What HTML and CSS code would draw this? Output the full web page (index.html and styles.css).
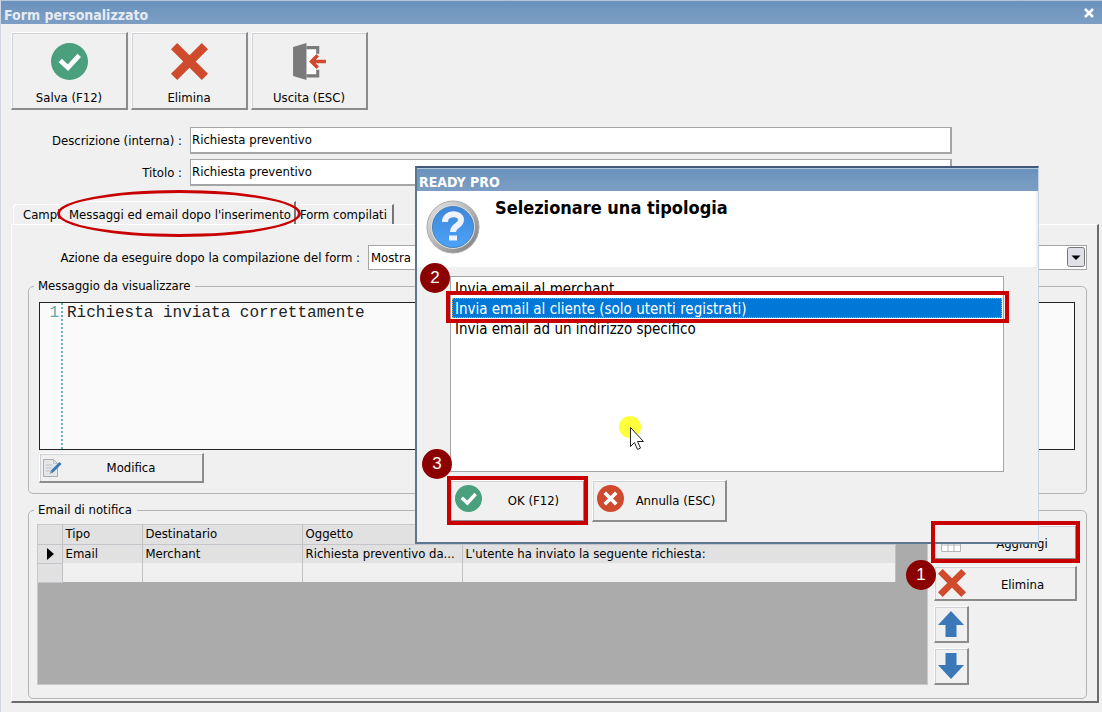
FILE: index.html
```
<!DOCTYPE html>
<html lang="it">

<head>
    <meta charset="UTF-8">
    <meta name="viewport" content="width=device-width, initial-scale=1.0">
    <title>Form personalizzato</title>
    <link rel="stylesheet" href="styles.css">
</head>

<body>

    <!-- shared icons -->
    <svg class="sprite" aria-hidden="true">
        <symbol id="icon-ok" viewBox="0 0 36 36">
            <circle cx="18" cy="18" r="18" fill="#4a9f7c" />
            <path d="M9 17l7.500 7 11-12" fill="none" stroke="#fff" stroke-width="4.500" />
        </symbol>
        <symbol id="icon-cross" viewBox="0 0 36 36">
            <path d="M3 3l30 30M33 3L3 33" stroke="#d04a2d" stroke-width="8.500" />
        </symbol>
        <symbol id="icon-exit" viewBox="0 0 36 36">
            <path d="M16 4h10v28H16z" fill="#fff" />
            <path d="M15 4.500h11v6M15 32h11v-6" fill="none" stroke="#7a7a7a" stroke-width="3" />
            <path d="M2 4L15 0v36L2 32z" fill="#7a7a7a" />
            <path d="M34 18H20M26 12l-6 6 6 6" fill="none" stroke="#d04a2d" stroke-width="3.500" />
        </symbol>
        <symbol id="icon-cancel" viewBox="0 0 26 26">
            <circle cx="13" cy="13" r="13" fill="#d04a2d" />
            <path d="M7.500 7.500l11 11M18.500 7.500l-11 11" stroke="#fff" stroke-width="3.500" />
        </symbol>
        <symbol id="icon-arrow" viewBox="0 0 26 26">
            <path d="M13 0l13 14h-7.500v12h-11V14H0z" fill="#3a78b8" />
        </symbol>
    </svg>

    <main class="window">
        <header class="titlebar">
            <h1>Form personalizzato</h1>
            <button type="button" class="close" aria-label="Chiudi">
                <svg width="10" height="10" viewBox="0 0 10 10"><path d="M1 1l8 8M9 1L1 9" stroke="#fff" stroke-width="2.500" /></svg>
            </button>
        </header>

        <div class="toolbar">
            <button type="button" class="btn btn-tool"><svg><use href="#icon-ok" /></svg>Salva (F12)</button>
            <button type="button" class="btn btn-tool"><svg><use href="#icon-cross" /></svg>Elimina</button>
            <button type="button" class="btn btn-tool"><svg><use href="#icon-exit" /></svg>Uscita (ESC)</button>
        </div>

        <div class="fields">
            <label for="descrizione">Descrizione (interna) :</label>
            <input type="text" id="descrizione" value="Richiesta preventivo">
            <label for="titolo">Titolo :</label>
            <input type="text" id="titolo" value="Richiesta preventivo">
        </div>

        <div class="tabs" role="tablist">
            <button type="button" class="tab tab-first" role="tab">Campi</button>
            <div class="marked">
                <button type="button" class="tab active" role="tab" aria-selected="true">Messaggi ed email dopo l'inserimento</button>
                <span class="mark mark-oval"></span>
            </div>
            <button type="button" class="tab" role="tab">Form compilati</button>
        </div>

        <section class="panel">
            <div class="action-row">
                <label for="azione">Azione da eseguire dopo la compilazione del form :</label>
                <div class="select-wrap">
                    <select id="azione">
                        <option>Mostra messaggio</option>
                    </select>
                    <svg class="drop" viewBox="0 0 18 20"><rect x=".5" y=".5" width="17" height="19" rx="2" fill="#dfe1e6" stroke="#777" /><path d="M4.500 8.500h9L9 13z" fill="#000" /></svg>
                </div>
            </div>

            <fieldset class="group">
                <legend>Messaggio da visualizzare</legend>
                <div class="editor">
                    <span class="gutter">1</span>
                    <textarea aria-label="Messaggio da visualizzare" spellcheck="false">Richiesta inviata correttamente</textarea>
                </div>
                <button type="button" class="btn btn-edit">
                    <svg width="20" height="20" viewBox="0 0 20 20">
                        <path d="M1.500 1.500h10l4 4v13h-14z" fill="#e4e6e8" stroke="#a9adb1" />
                        <path d="M11.500 1.500v4h4M4 7h6M4 10h6M4 13h4" fill="none" stroke="#bfc3c7" />
                        <path d="M18.500 5l-9 9" stroke="#3a78b8" stroke-width="3" />
                        <path d="M9 12.500L7.500 16l3.500-1.500z" fill="#8a9299" />
                    </svg>
                    <span>Modifica</span>
                </button>
            </fieldset>

            <fieldset class="group group-mail">
                <legend>Email di notifica</legend>
                <div class="mail">
                    <div class="grid">
                        <table>
                            <colgroup>
                                <col class="col-mark">
                                <col class="col-type">
                                <col class="col-text">
                                <col class="col-text">
                                <col>
                            </colgroup>
                            <thead>
                                <tr>
                                    <th></th>
                                    <th>Tipo</th>
                                    <th>Destinatario</th>
                                    <th>Oggetto</th>
                                    <th>Messaggio</th>
                                </tr>
                            </thead>
                            <tbody>
                                <tr class="current">
                                    <th><svg width="7" height="12" viewBox="0 0 7 12"><path d="M0 0l7 6-7 6z" /></svg></th>
                                    <td>Email</td>
                                    <td>Merchant</td>
                                    <td>Richiesta preventivo da...</td>
                                    <td>L'utente ha inviato la seguente richiesta:</td>
                                </tr>
                                <tr>
                                    <th></th>
                                    <td></td>
                                    <td></td>
                                    <td></td>
                                    <td></td>
                                </tr>
                            </tbody>
                        </table>
                    </div>
                    <div class="side">
                        <div class="marked">
                            <button type="button" class="btn btn-side">
                                <svg width="20" height="20" viewBox="0 0 20 20"><path d="M.500.500h19v19H.500zM.500 7h19M.500 13h19M7 .500v19M13 .500v19" fill="#fff" stroke="#b5b5b5" /></svg>
                                <span>Aggiungi</span>
                            </button>
                            <span class="mark mark-box"></span>
                            <span class="badge badge-add">1</span>
                        </div>
                        <button type="button" class="btn btn-side"><svg width="28" height="28"><use href="#icon-cross" /></svg><span>Elimina</span></button>
                        <button type="button" class="btn btn-move" aria-label="Sposta su"><svg width="26" height="26"><use href="#icon-arrow" /></svg></button>
                        <button type="button" class="btn btn-move down" aria-label="Sposta giù"><svg width="26" height="26"><use href="#icon-arrow" /></svg></button>
                    </div>
                </div>
            </fieldset>
        </section>

        <div class="dialog" role="dialog" aria-labelledby="dialogTitle">
            <div class="titlebar">READY PRO</div>
            <div class="dialog-head">
                <svg width="54" height="54" viewBox="0 0 54 54">
                    <defs>
                        <linearGradient id="ring" x1="0" y1="0" x2="1" y2="1">
                            <stop offset="0" stop-color="#e8e8e8" />
                            <stop offset=".5" stop-color="#b5b5b5" />
                            <stop offset="1" stop-color="#777" />
                        </linearGradient>
                        <linearGradient id="ball" x1="0" y1="0" x2="0" y2="1">
                            <stop offset="0" stop-color="#3f86d8" />
                            <stop offset="1" stop-color="#4ba4f8" />
                        </linearGradient>
                    </defs>
                    <circle cx="27" cy="27" r="26" fill="url(#ring)" stroke="#aaa" />
                    <circle cx="27" cy="27" r="22" fill="#ddd" />
                    <circle cx="27" cy="27" r="20.500" fill="url(#ball)" stroke="#4a80c0" />
                    <path d="M19 22c0-10 16-10 16-2 0 6-8 5-8 12" fill="none" stroke="#f0f2ff" stroke-width="6" />
                    <path d="M23 35.500h8v5h-8z" fill="#f0f2ff" />
                </svg>
                <h2 id="dialogTitle">Selezionare una tipologia</h2>
            </div>
            <div class="dialog-body">
                <div class="marked">
                    <select class="listbox" size="9" aria-labelledby="dialogTitle">
                        <option>Invia email al merchant</option>
                        <option selected>Invia email al cliente (solo utenti registrati)</option>
                        <option>Invia email ad un indirizzo specifico</option>
                    </select>
                    <span class="mark mark-option"></span>
                    <span class="badge badge-list">2</span>
                    <svg class="pointer" width="28" height="36" viewBox="0 0 28 36">
                        <circle cx="11" cy="11" r="11" fill="#ffff3c" />
                        <path d="M11.500 11.500v19l4-4 3 7 3-1.500-3-6.500h6z" fill="#fff" stroke="#222" />
                    </svg>
                </div>
                <div class="dialog-buttons">
                    <div class="marked">
                        <button type="button" class="btn btn-dialog"><svg width="27" height="27"><use href="#icon-ok" /></svg><span>OK (F12)</span></button>
                        <span class="mark mark-box"></span>
                        <span class="badge badge-ok">3</span>
                    </div>
                    <button type="button" class="btn btn-dialog"><svg width="27" height="27"><use href="#icon-cancel" /></svg><span>Annulla (ESC)</span></button>
                </div>
            </div>
        </div>
    </main>

</body>

</html>
```
FILE: styles.css
```
* {
    box-sizing: border-box;
}

body {
    margin: 0;
    background-color: #f0f0f0;
    color: #000;
    font-family: Tahoma, "DejaVu Sans Condensed", "Noto Sans", sans-serif;
    font-size: 13px;
    line-height: 16px;
}

button,
input,
select {
    font: inherit;
    color: inherit;
}

.sprite {
    position: absolute;
    width: 0;
    height: 0;
}

.window {
    position: relative;
    display: flex;
    flex-direction: column;
    min-height: 100vh;
    padding-bottom: 9px;
    border-left: 1px solid #d0d3e2;
}

.titlebar {
    display: flex;
    justify-content: space-between;
    align-items: center;
    height: 24px;
    padding: 4px 8px 0 3px;
    border-top: 1px solid #b4c8dc;
    background: linear-gradient(#6a92bc, #7d9ec4);
    color: #e6ebf2;
    font-size: 14px;
    font-weight: bold;
}

.titlebar h1 {
    margin: 0;
    font-size: 14px;
}

.close {
    display: flex;
    padding: 0 0 4px;
    border: none;
    background: none;
}

/* Buttons */
.btn {
    display: flex;
    align-items: center;
    padding: 2px;
    border: 1px solid #fff;
    border-right: 2px solid #8c8c8c;
    border-bottom: 2px solid #8c8c8c;
    background-color: #f0f0f0;
    box-shadow: inset 1px 1px #cfcfd6;
}

.btn span {
    flex: 1;
    text-align: center;
}

.toolbar {
    display: flex;
    gap: 3px;
    padding: 8px 10px 0;
}

.btn-tool {
    flex-direction: column;
    justify-content: space-between;
    width: 117px;
    height: 78px;
    padding: 10px 2px 2px;
}

.btn-tool svg {
    width: 37px;
    height: 37px;
}

/* Fields */
.fields {
    display: grid;
    grid-template-columns: 171px 1fr;
    gap: 5px 8px;
    align-items: center;
    padding: 17px 150px 0 10px;
}

.fields label {
    text-align: right;
}

.fields input {
    height: 27px;
    padding: 0 1px 1px;
    border: 1px solid #a5a5a5;
    border-width: 1px 2px 2px 1px;
    background-color: #fff;
}

/* Tabs */
.tabs {
    display: flex;
    align-items: flex-end;
    height: 38px;
    padding-left: 12px;
}

.marked {
    position: relative;
}

.tab {
    display: block;
    height: 20px;
    padding: 0 5px 0 4px;
    border: none;
    border-top: 1px solid #fff;
    border-right: 2px solid #777;
    background-color: #f0f0f0;
    white-space: nowrap;
}

.tab-first {
    width: 48px;
    padding: 0 0 0 9px;
    border-left: 1px solid #fff;
    border-right: none;
    border-radius: 4px 0 0;
    text-align: left;
}

.tab.active {
    height: 23px;
    padding: 3px 3px 0 8px;
}

.panel {
    flex: 1;
    display: flex;
    flex-direction: column;
    margin: 0 3px 0 10px;
    padding: 20px 10px 2px 16px;
    border: 1px solid #fff;
    border-right: 2px solid #6c6c6c;
    border-bottom: 2px solid #6c6c6c;
}

.action-row {
    display: flex;
    align-items: center;
    gap: 8px;
    margin-bottom: 8px;
}

.action-row label {
    width: 332px;
    text-align: right;
}

.select-wrap {
    position: relative;
    flex: 1;
}

.select-wrap select {
    display: block;
    width: 100%;
    height: 25px;
    padding: 0 2px;
    border: 1px solid #a5a5a5;
    border-radius: 0;
    background-color: #fff;
    appearance: none;
}

.drop {
    position: absolute;
    top: 2px;
    right: 2px;
    width: 18px;
    height: 20px;
    pointer-events: none;
}

/* Groups */
.group {
    min-width: 0;
    margin: 0 0 8px;
    padding: 8px 11px 10px 10px;
    border: 1px solid #b4b4b4;
    border-radius: 5px;
}

.group legend {
    margin-left: -5px;
    padding: 0 5px 0 4px;
}

.editor {
    display: flex;
    height: 148px;
    margin-bottom: 3px;
    border: 1px solid #222;
    background-color: #fafafa;
    font: 16px/20px "Liberation Mono", monospace;
}

.gutter {
    width: 23px;
    padding-right: 2px;
    border-right: 2px dotted #6fb4b4;
    color: #5fa8a8;
    text-align: right;
}

.editor textarea {
    flex: 1;
    padding: 0 4px;
    border: none;
    outline: none;
    background: none;
    color: #222;
    font: inherit;
    resize: none;
}

.btn-edit {
    width: 165px;
    height: 30px;
}

.group-mail {
    flex: 1;
    display: flex;
    flex-direction: column;
    margin-bottom: 0;
    padding: 6px 9px 10px 8px;
}

.group-mail legend {
    margin-left: -3px;
}

.mail {
    flex: 1;
    display: flex;
    gap: 6px;
}

.grid {
    flex: 1;
    padding-right: 31px;
    border: 1px solid #c8c8cc;
    background-color: #ababab;
}

.grid table {
    width: 100%;
    border-collapse: collapse;
    table-layout: fixed;
}

.col-mark {
    width: 24px;
}

.col-type {
    width: 80px;
}

.col-text {
    width: 160px;
}

.grid th,
.grid td {
    height: 19px;
    padding: 0 3px;
    border-right: 1px solid #bfbfc4;
    font-weight: normal;
    line-height: 18px;
    text-align: left;
    white-space: nowrap;
    overflow: hidden;
}

.grid th {
    border-bottom: 1px solid #c4c4ca;
    background-color: #e1e1e1;
}

.grid tbody th {
    padding: 0 4px 0 9px;
}

.grid th svg {
    display: block;
}

.grid td {
    background-color: #f0f0f0;
}

.grid .current td {
    background-color: #e1e1e1;
}

.side {
    display: flex;
    flex-direction: column;
    gap: 5px;
    width: 143px;
    padding-top: 1px;
}

.btn-side {
    width: 100%;
    height: 35px;
    padding: 2px 2px 2px 3px;
}

.btn-side span {
    padding: 3px 0 0 6px;
}

.side > .marked {
    margin-bottom: 1px;
}

.side > .marked svg {
    margin: 0 4px 0 3px;
}

.btn-move {
    justify-content: center;
    width: 35px;
    height: 37px;
}

.down svg {
    transform: rotate(180deg);
}

/* Dialog */
.dialog {
    position: absolute;
    top: 166px;
    left: 414px;
    z-index: 1;
    width: 624px;
    border: 2px solid #5c7690;
    border-right: 1px solid #c5d5e3;
    border-top-color: #40587a;
    background-color: #f0f0f0;
}

.dialog .titlebar {
    height: 23px;
    padding-left: 2px;
    color: #fff;
}

.dialog-head {
    display: flex;
    gap: 15px;
    height: 76px;
    margin-right: 2px;
    padding: 9px;
    background-color: #fff;
}

.dialog-head h2 {
    margin: 0;
    font-size: 18px;
    line-height: 16px;
}

.dialog-body {
    padding: 9px 34px 20px 33px;
}

.listbox {
    display: block;
    width: 100%;
    height: 196px;
    padding: 1px;
    border: 1px solid #a5a5a5;
    border-radius: 0;
    outline: none;
    background-color: #fff;
    font-size: 15px;
    overflow: hidden;
}

.listbox option {
    min-height: 20px;
    padding: 2px 3px 0;
    line-height: 18px;
}

.listbox option:checked {
    outline: 1px dotted #e8a050;
    outline-offset: -1px;
    background: #0078d7 linear-gradient(#0078d7, #0078d7);
    color: #fff;
}

.dialog-buttons {
    display: flex;
    gap: 7px;
    padding-top: 8px;
}

.btn-dialog {
    width: 135px;
    height: 42px;
    padding: 2px 4px 6px;
}

.btn-dialog span {
    padding: 5px 0 0 6px;
}

/* Step marks */
.mark {
    position: absolute;
    z-index: 2;
    border: 4px solid #c80000;
    pointer-events: none;
}

.mark-oval {
    top: -11px;
    right: -5px;
    bottom: -13px;
    left: -4px;
    border-width: 3px;
    border-radius: 50%;
}

.mark-box {
    inset: -4px -3px -3px;
}

.mark-option {
    top: 15px;
    right: -5px;
    left: -4px;
    height: 32px;
}

.badge {
    position: absolute;
    z-index: 3;
    width: 30px;
    height: 30px;
    border-radius: 50%;
    background-color: #8b0000;
    color: #fff;
    font: 17px/30px "Liberation Sans", sans-serif;
    text-align: center;
}

.badge-add {
    top: 35px;
    left: -28px;
}

.badge-list {
    top: -13px;
    left: -30px;
}

.badge-ok {
    top: -31px;
    left: -28px;
}

.pointer {
    position: absolute;
    top: 140px;
    left: 169px;
}
```
